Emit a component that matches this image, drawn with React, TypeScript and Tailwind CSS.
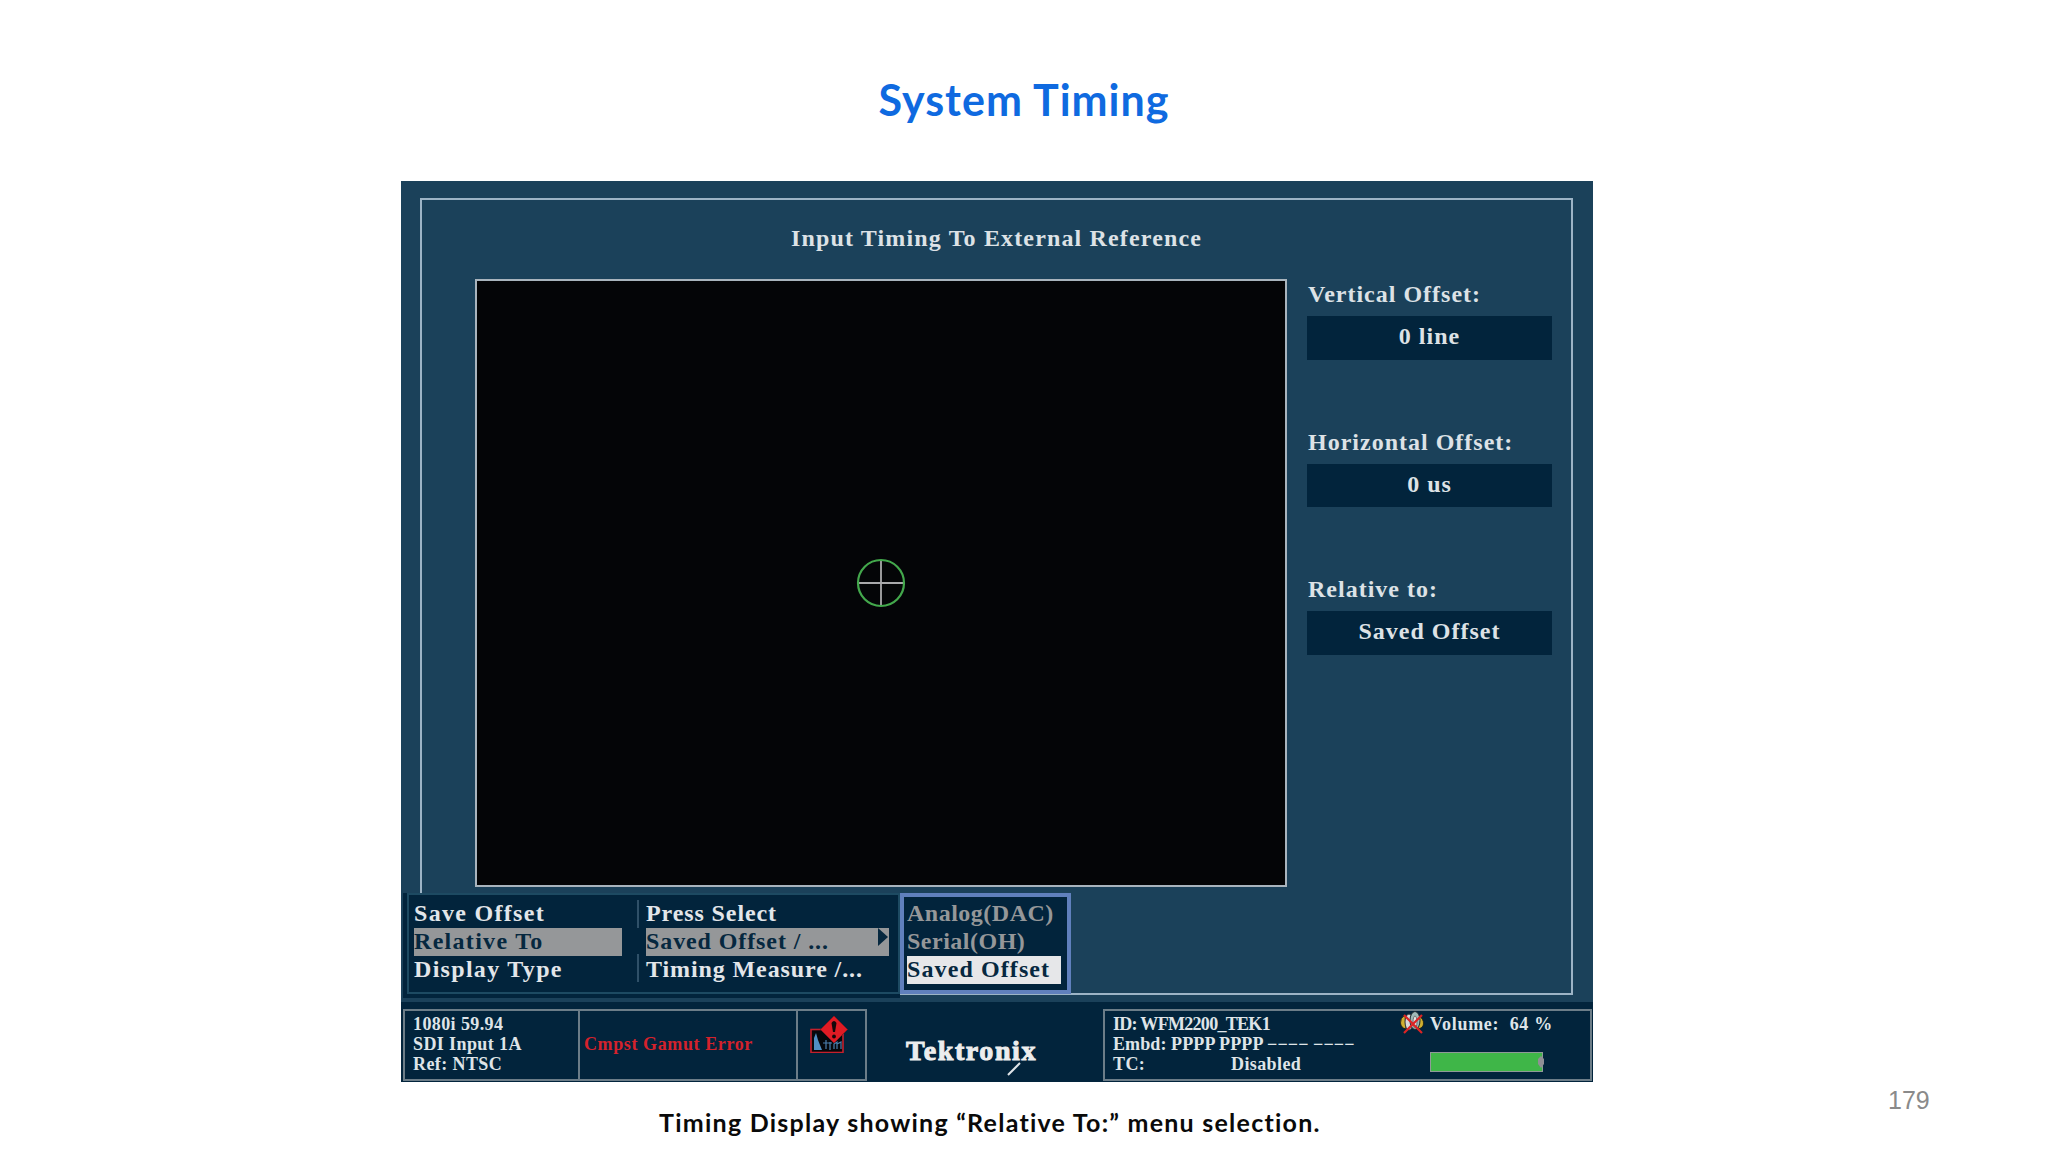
import clsx from 'clsx';

interface Readout {
  label: string;
  value: string;
}

interface MenuItem {
  text: string;
  state?: 'active' | 'disabled' | 'selected';
  arrow?: boolean;
}

const readouts: Readout[] = [
  { label: 'Vertical Offset:', value: '0 line' },
  { label: 'Horizontal Offset:', value: '0 us' },
  { label: 'Relative to:', value: 'Saved Offset' },
];

const mainMenu: MenuItem[] = [
  { text: 'Save Offset' },
  { text: 'Relative To', state: 'active' },
  { text: 'Display Type' },
];

const valueMenu: MenuItem[] = [
  { text: 'Press Select' },
  { text: 'Saved Offset / ...', state: 'active', arrow: true },
  { text: 'Timing Measure /...' },
];

const subMenu: MenuItem[] = [
  { text: 'Analog(DAC)', state: 'disabled' },
  { text: 'Serial(OH)', state: 'disabled' },
  { text: 'Saved Offset', state: 'selected' },
];

function MenuColumn({ items, className }: { items: MenuItem[]; className: string }) {
  return (
    <ul className={className}>
      {items.map(item => (
        <li
          key={item.text}
          className={clsx(
            'flex h-7 items-start justify-between whitespace-pre',
            !item.state && 'text-[#e2e6ea]',
            item.state === 'active' && 'bg-[#959799] text-[#06283f]',
            item.state === 'disabled' && 'tracking-[0.5px] text-[#959799]',
            item.state === 'selected' && 'bg-[#e6e7e9] text-[#06283f]',
          )}
        >
          <span className="leading-[26px]">{item.text}</span>
          {item.arrow && (
            <svg width="11" height="18" viewBox="0 0 11 18">
              <path d="M0 0 L10 9 L0 18 Z" fill="#06283f" />
            </svg>
          )}
        </li>
      ))}
    </ul>
  );
}

function Crosshair() {
  return (
    <svg width="50" height="50" viewBox="0 0 50 50" fill="none">
      <path d="M25 2 V48 M2 25 H48" stroke="#a9a9ab" strokeWidth="1.8" />
      <circle cx="25" cy="25" r="23" stroke="#43a84c" strokeWidth="2.2" />
    </svg>
  );
}

function AlarmIcon() {
  return (
    <svg width="38" height="38" viewBox="0 0 38 38" fill="none">
      <rect x="1" y="14.5" width="32" height="23" fill="#05080c" stroke="#c5202c" strokeWidth="1.6" />
      <path d="M4 35 V23 L6 18 L8 25 L12 35 Z" fill="#4f8fc4" />
      <path d="M13 28 H22 M16 25 V34 M20 27 V35 M24 34 V29 L27 27 V34 M27 29 L31 27 V34" stroke="#4b7fae" strokeWidth="1.2" />
      <path d="M24 1 L37.5 14.5 L24 28 L10.5 14.5 Z" fill="#e01b24" stroke="#8a1620" strokeWidth="1" />
      <path d="M21.5 8 Q24 4 26.5 8 L25 17 H23 Z" fill="#14070a" />
      <circle cx="24" cy="21.5" r="1.9" fill="#14070a" />
    </svg>
  );
}

function MutedIcon() {
  return (
    <svg width="24" height="23" viewBox="0 0 24 23" fill="none">
      <path d="M5 4 Q0 7 0.5 12 Q1 17 6 18 Z" fill="#d0b030" stroke="#1a1a12" strokeWidth="0.8" />
      <path d="M18 4 Q24 8 23.5 13 Q23 17 18 18 Z" fill="#d0b030" stroke="#1a1a12" strokeWidth="0.8" />
      <ellipse cx="9" cy="11" rx="4" ry="8" fill="#d8d8d8" stroke="#333" />
      <ellipse cx="15" cy="9.5" rx="5" ry="9" fill="#9fb9b8" stroke="#1f2a30" />
      <ellipse cx="15" cy="11" rx="2" ry="6" fill="#e4e4e4" stroke="#555" strokeWidth="0.8" />
      <path d="M4 4 L22 22 M22 4 L4 22" stroke="#dc2424" strokeWidth="2.2" />
    </svg>
  );
}

function StatusBar() {
  return (
    <div className="flex h-20 items-start bg-[#02243c] pt-[7px] pl-0.5 text-[18px] leading-5 tracking-[0.4px] text-[#dfe4e8]">
      <div className="flex h-[72px] w-[464px] border-2 border-[#6c7d88]">
        <div className="w-[175px] border-r-2 border-[#6c7d88] pt-[3px] pl-2 whitespace-pre">
          <p>1080i 59.94</p>
          <p>SDI Input 1A</p>
          <p>Ref: NTSC</p>
        </div>
        <div className="flex w-[218px] items-center border-r-2 border-[#6c7d88] pb-0.5 pl-1 tracking-[0.6px] text-[#d4222c]">
          Cmpst Gamut Error
        </div>
        <div className="pt-1 pl-3">
          <AlarmIcon />
        </div>
      </div>
      <div className="flex w-[236px] flex-col items-start pt-[26px] pl-[39px]">
        <span className="text-[28px] leading-8 font-bold tracking-[1.6px] text-[#eceded] [-webkit-text-stroke:1px_#eceded]">
          Tektronix
        </span>
        <svg width="14" height="14" viewBox="0 0 14 14" className="-mt-[5px] ml-[101px]">
          <path d="M1 13 L13 1" stroke="#dfe4e8" strokeWidth="2" />
        </svg>
      </div>
      <div className="flex h-[72px] w-[489px] justify-between border-2 border-[#6c7d88] pt-[3px] pr-9 pl-2">
        <div className="whitespace-pre">
          <p className="tracking-[-0.7px]">ID: WFM2200_TEK1</p>
          <p className="tracking-[0.1px]">Embd: PPPP PPPP −−−− −−−−</p>
          <p className="flex">
            <span className="w-[118px]">TC:</span>
            <span>Disabled</span>
          </p>
        </div>
        <div className="flex w-[154px] flex-col">
          <div className="flex items-start">
            <div className="-mt-[3px] w-[30px]">
              <MutedIcon />
            </div>
            <span className="tracking-[0.7px] whitespace-pre">Volume:  64 %</span>
          </div>
          <div className="mt-[18px] ml-[30px] h-5 w-[113px] border border-[#8f9a98] bg-[#3fb648]">
            <svg width="8" height="18" viewBox="0 0 8 18" className="ml-[106px] overflow-visible">
              <path d="M4 3 L7 6 V11 L4 15 L1 11 V6 Z" fill="#8f8f95" />
            </svg>
          </div>
        </div>
      </div>
    </div>
  );
}

export default function App() {
  return (
    <div className="flex h-[1152px] w-[2048px] flex-col overflow-hidden bg-white">
      <h1 className="h-[181px] pt-[73px] text-center font-['Lato',sans-serif] text-[43px] leading-[54px] font-bold tracking-[1px] text-[#0f6ae0]">
        System Timing
      </h1>

      <main className="ml-[401px] flex h-[901px] w-[1192px] flex-col bg-[#1b415a] font-['Liberation_Serif',serif] font-bold">
        <section className="relative h-[821px] pt-[17px] pl-[19px]">
          <div className="h-[797px] w-[1153px] border-2 border-[#9db4c6]">
            <h2 className="pt-[24px] text-center text-[24px] leading-7 tracking-[1.15px] text-[#dde2e6]">
              Input Timing To External Reference
            </h2>
            <div className="mt-[27px] flex pl-[53px]">
              <div className="flex h-[608px] w-[812px] items-center justify-center border-2 border-[#a9b4bd] bg-[#040507]">
                <Crosshair />
              </div>
              <div className="mt-px ml-5 w-[245px] text-[24px] tracking-[1px] text-[#dde2e6]">
                {readouts.map(({ label, value }) => (
                  <div key={label} className="h-[147.6px]">
                    <p className="h-9 pl-px leading-7">{label}</p>
                    <p className="h-[43.5px] bg-[#02243c] text-center leading-[41px]">{value}</p>
                  </div>
                ))}
              </div>
            </div>
          </div>

          {/* soft menu lies over the lower left corner of the frame */}
          <div className="absolute top-[712px] left-[2px] flex h-[105px] w-[669px] text-[24px] tracking-[1px]">
            <div className="h-full w-[497px] bg-[#02243c] pl-1">
              <div className="flex h-[101px] border-2 border-[#1d4a62] pt-[5px] pl-[5px]">
                <MenuColumn items={mainMenu} className="w-[208px] tracking-[1.3px]" />
                <div className="ml-[15px] flex w-[9px] flex-col justify-between">
                  <div className="h-7 w-0.5 bg-[#2f5068]" />
                  <div className="mb-[10px] h-7 w-0.5 bg-[#2f5068]" />
                </div>
                <MenuColumn items={valueMenu} className="w-[243px] tracking-[0.9px]" />
              </div>
            </div>
            <div className="h-[101px] w-[171px] border-4 border-[#6080bd] bg-[#02243c] pt-[3px] pl-[3px]">
              <MenuColumn items={subMenu} className="w-[154px] tracking-[1.1px]" />
            </div>
          </div>
        </section>

        <StatusBar />
      </main>

      <footer className="flex pt-6 font-['Lato',sans-serif]">
        <p className="w-[1888px] pl-[659px] text-[25px] leading-8 font-bold tracking-[1.25px] text-[#0a0a0a]">
          Timing Display showing “Relative To:” menu selection.
        </p>
        <span className="-mt-[22px] font-['Liberation_Sans',sans-serif] text-[25px] leading-8 text-[#8a8a8a]">179</span>
      </footer>
    </div>
  );
}
